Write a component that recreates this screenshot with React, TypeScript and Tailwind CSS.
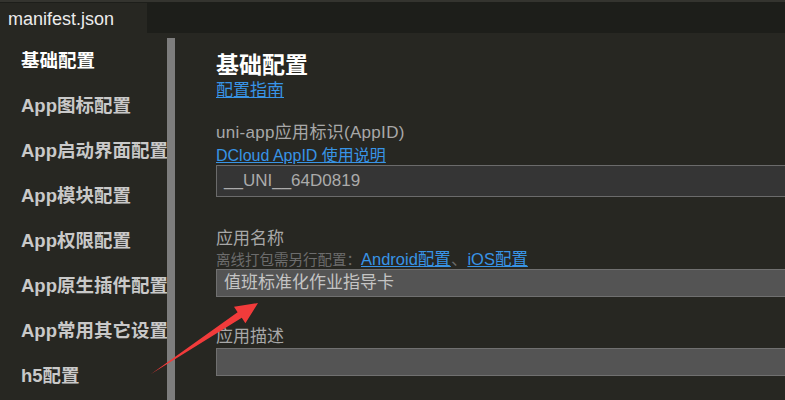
import React from "react";

const menu = [
  "基础配置",
  "App图标配置",
  "App启动界面配置",
  "App模块配置",
  "App权限配置",
  "App原生插件配置",
  "App常用其它设置",
  "h5配置",
];

const font = { fontFamily: '"Liberation Sans", "Noto Sans CJK SC", sans-serif' };

export default function App() {
  return (
    <div
      className="relative w-[785px] h-[400px] overflow-hidden bg-[#272722]"
      style={font}
    >
      {/* tab bar */}
      <div className="h-[33px] bg-[#1d1e1a] border-t-2 border-[#34342f] flex">
        <div className="w-[147px] h-full mt-px bg-[#272722] pl-[8px] text-[18px] leading-[32px] text-[#ececec]">
          manifest.json
        </div>
      </div>

      <div className="flex h-[367px]">
        {/* side menu */}
        <div className="w-[167px] shrink-0 pt-[5px] pl-[21px] overflow-hidden">
          {menu.map((m, i) => (
            <div
              key={m}
              className={`h-[45px] leading-[45px] text-[18.5px] font-bold whitespace-nowrap ${
                i === 0 ? "text-white" : "text-[#c9c9c9]"
              }`}
            >
              {m}
            </div>
          ))}
        </div>

        {/* scrollbar */}
        <div className="w-[8px] shrink-0 mt-[5px] bg-[#7d7d7d]" />

        {/* content */}
        <div className="pl-[41px] pt-[17px] w-[800px] shrink-0">
          <div className="text-[23px] leading-[30px] font-bold text-white">基础配置</div>
          <a className="block mt-px text-[17px] leading-[20px] text-[#3894e6] underline">配置指南</a>

          <div className="mt-[20px] text-[17px] leading-[24px] text-[#a8a8a8] tracking-[0.3px]">
            uni-app应用标识(AppID)
          </div>
          <a className="block mt-px text-[16px] leading-[19px] text-[#3894e6] underline">
            DCloud AppID 使用说明
          </a>
          <div className="h-[32px] w-[700px] bg-[#353535] border border-[#6b6b6b] pl-[7px] text-[17px] leading-[30px] text-[#ababab]">
            __UNI__64D0819
          </div>

          <div className="mt-[31px] text-[17px] leading-[22px] text-[#a8a8a8]">应用名称</div>
          <div className="text-[14.5px] leading-[18px] text-[#6c6c6c] whitespace-nowrap">
            离线打包需另行配置：
            <a className="text-[16.5px] text-[#3894e6] underline">Android配置</a>
            <span className="text-[16.5px]">、</span>
            <a className="text-[16.5px] text-[#3894e6] underline">iOS配置</a>
          </div>
          <div className="h-[28px] w-[700px] bg-[#545454] border border-[#707070] pl-[7px] text-[17px] leading-[26px] text-[#c4c4c4]">
            值班标准化作业指导卡
          </div>

          <div className="mt-[29px] text-[17px] leading-[22px] text-[#a8a8a8]">应用描述</div>
          <div className="h-[28px] w-[700px] bg-[#545454] border border-[#707070]" />
        </div>
      </div>

      {/* red annotation arrow */}
      <svg className="absolute left-0 top-0 pointer-events-none" width="785" height="400">
        <polygon
          points="151,374 237.6,312.2 234,306.8 258,303 245.4,323.2 241.8,317.8"
          fill="#f23b3b"
        />
      </svg>
    </div>
  );
}
